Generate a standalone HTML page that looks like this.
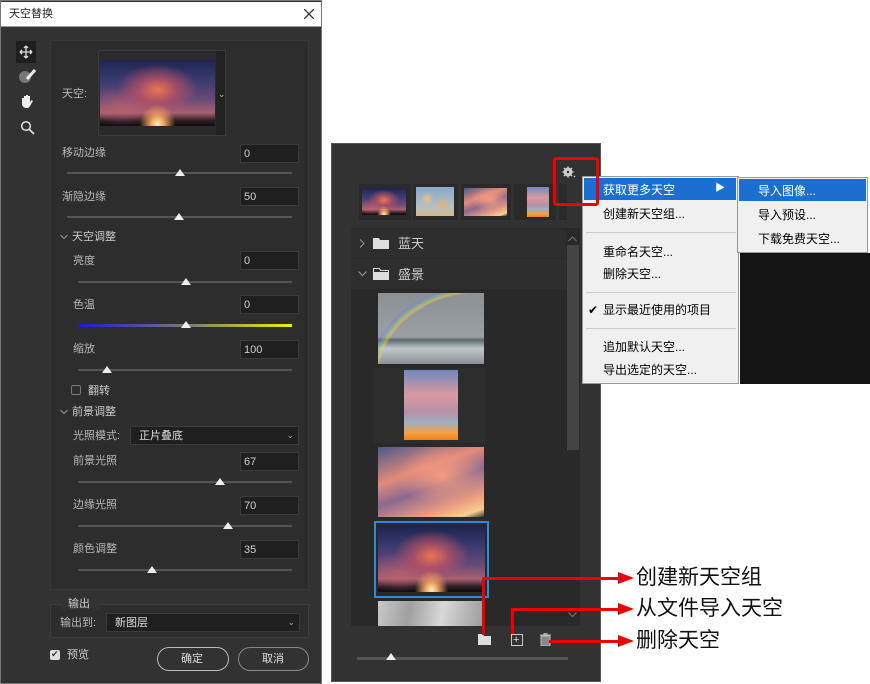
<!DOCTYPE html>
<html><head><meta charset="utf-8">
<style>
*{margin:0;padding:0;box-sizing:border-box}
body{width:870px;height:684px;background:#fff;position:relative;overflow:hidden;font-family:"Liberation Sans","Noto Sans CJK SC",sans-serif;font-size:11px;color:#b8b8b8}
.a{position:absolute}
.t{position:absolute;white-space:nowrap;line-height:12px}
.inp{position:absolute;background:#1f1f1f;border:1px solid #3a3a3a;height:19px;color:#d0d0d0;padding:3px 0 0 3px;font-size:11px;line-height:12px}
.trk{position:absolute;height:2px;background:#555}
.th{position:absolute;width:0;height:0;border-left:5px solid transparent;border-right:5px solid transparent;border-bottom:7px solid #eee}
.sun{background:radial-gradient(ellipse at 50% 97%,#fff0c0 0,#f0a060 8%,transparent 22%),radial-gradient(ellipse at 50% 45%,rgba(240,120,80,.95) 0,rgba(190,80,100,.7) 25%,transparent 50%),radial-gradient(ellipse at 20% 70%,rgba(200,100,110,.6) 0,transparent 30%),linear-gradient(#1e2450,#3a3a70 30%,#6a4a78 60%,#a86070 80%,#2a1c24 92%,#100c12)}
.pink{background:radial-gradient(ellipse at 60% 40%,#f59a80 0,transparent 50%),linear-gradient(160deg,#4a5a8a,#e38a7a 35%,#8a6a90 55%,#f0a080 80%,#f5d090 92%,#403030)}
.vert{background:linear-gradient(#6f88c0,#d99aa0 35%,#b890a8 60%,#9cb0c0 75%,#f5a040 90%,#f08020)}
.cloud{background:radial-gradient(circle at 30% 40%,#f0c080 0,transparent 20%),radial-gradient(circle at 70% 60%,#e8b070 0,transparent 20%),linear-gradient(#8aa8c8,#b8c0c0 70%,#d8b888)}
.menu .t{color:#000;font-size:12px}
.sep{position:absolute;height:1px;background:#c8c8c8}
.ann{position:absolute;font-size:21px;color:#111;white-space:nowrap;line-height:22px}
.rl{position:absolute;background:#e00}
.arr{position:absolute;width:0;height:0;border-top:6px solid transparent;border-bottom:6px solid transparent;border-left:16px solid #e00}
</style></head><body>

<div class="a" style="left:0;top:0;width:322px;height:684px;background:#323232;border:1px solid #777"></div>
<div class="a" style="left:1px;top:2px;width:320px;height:25px;background:#fff;border-bottom:1px solid #999"></div>
<div class="t" style="left:9px;top:8px;color:#222;font-size:11px">天空替换</div>
<svg class="a" style="left:304px;top:9px" width="10" height="10"><path d="M0 0L10 10M10 0L0 10" stroke="#333" stroke-width="1.3"/></svg>

<div class="a" style="left:16px;top:41px;width:20px;height:22px;background:#1e1e1e"></div>
<svg class="a" style="left:19px;top:45px" width="14" height="14" viewBox="0 0 14 14"><path d="M7 1v12M1 7h12M7 1l-2 2M7 1l2 2M7 13l-2-2M7 13l2-2M1 7l2-2M1 7l2 2M13 7l-2-2M13 7l-2 2" stroke="#ddd" stroke-width="1.3" fill="none"/></svg>
<svg class="a" style="left:18px;top:68px" width="20" height="16" viewBox="0 0 20 16"><circle cx="7" cy="9" r="6" fill="#777"/><path d="M17 2L9 11" stroke="#eee" stroke-width="3"/></svg>
<svg class="a" style="left:19px;top:93px" width="16" height="16" viewBox="0 0 16 16"><path d="M3 9V5h2v3V3h2v5V2h2v6V3h2v6l1.5-2 1.5 1-3 5c-1 2-2 2-4 2H7c-2 0-4-2-4-4z" fill="#eee"/></svg>
<svg class="a" style="left:20px;top:120px" width="15" height="15" viewBox="0 0 15 15"><circle cx="6" cy="6" r="4.3" stroke="#ddd" stroke-width="1.5" fill="none"/><path d="M9 9l5 5" stroke="#ddd" stroke-width="1.8"/></svg>

<div class="a" style="left:50px;top:40px;width:259px;height:550px;background:#2d2d2d;border:1px solid #383838"></div>
<div class="a" style="left:98px;top:50px;width:128px;height:86px;background:#2a2a2a;border:1px solid #3a3a3a"></div>
<div class="a sun" style="left:100px;top:60px;width:115px;height:66px"></div>
<div class="a" style="left:216px;top:51px;width:9px;height:84px;background:#222"></div>
<div class="t" style="left:218px;top:88px;font-size:9px">⌄</div>
<div class="t" style="left:62px;top:88px">天空:</div>

<div class="t" style="left:62px;top:147px">移动边缘</div>
<div class="inp" style="left:240px;top:144px;width:59px">0</div>
<div class="trk" style="left:67px;top:172px;width:225px"></div><div class="th" style="left:175px;top:169px"></div>

<div class="t" style="left:62px;top:191px">渐隐边缘</div>
<div class="inp" style="left:240px;top:187px;width:59px">50</div>
<div class="trk" style="left:67px;top:216px;width:225px"></div><div class="th" style="left:174px;top:213px"></div>

<svg class="a" style="left:60px;top:234px" width="8" height="6"><path d="M0.5 1l3.5 3.5 3.5-3.5" stroke="#999" fill="none"/></svg>
<div class="t" style="left:72px;top:231px;color:#ccc">天空调整</div>

<div class="t" style="left:73px;top:255px">亮度</div>
<div class="inp" style="left:240px;top:251px;width:59px">0</div>
<div class="trk" style="left:78px;top:281px;width:214px"></div><div class="th" style="left:181px;top:278px"></div>

<div class="t" style="left:73px;top:299px">色温</div>
<div class="inp" style="left:240px;top:295px;width:59px">0</div>
<div class="a" style="left:78px;top:324px;width:214px;height:3px;background:linear-gradient(90deg,#1a1ad8,#777 50%,#f0f000)"></div><div class="th" style="left:181px;top:321px"></div>

<div class="t" style="left:73px;top:343px">缩放</div>
<div class="inp" style="left:240px;top:340px;width:59px">100</div>
<div class="trk" style="left:78px;top:369px;width:214px"></div><div class="th" style="left:102px;top:366px"></div>

<div class="a" style="left:71px;top:385px;width:10px;height:10px;border:1px solid #777;border-radius:2px"></div>
<div class="t" style="left:88px;top:385px;color:#ccc">翻转</div>

<svg class="a" style="left:60px;top:409px" width="8" height="6"><path d="M0.5 1l3.5 3.5 3.5-3.5" stroke="#999" fill="none"/></svg>
<div class="t" style="left:72px;top:406px;color:#ccc">前景调整</div>
<div class="t" style="left:73px;top:430px">光照模式:</div>
<div class="inp" style="left:130px;top:426px;width:169px;padding-left:8px;color:#ddd">正片叠底<span style="position:absolute;right:4px;top:2px;font-size:9px;color:#aaa">⌄</span></div>

<div class="t" style="left:73px;top:455px">前景光照</div>
<div class="inp" style="left:240px;top:452px;width:59px">67</div>
<div class="trk" style="left:78px;top:481px;width:214px"></div><div class="th" style="left:215px;top:478px"></div>

<div class="t" style="left:73px;top:499px">边缘光照</div>
<div class="inp" style="left:240px;top:496px;width:59px">70</div>
<div class="trk" style="left:78px;top:525px;width:214px"></div><div class="th" style="left:223px;top:522px"></div>

<div class="t" style="left:73px;top:543px">颜色调整</div>
<div class="inp" style="left:240px;top:540px;width:59px">35</div>
<div class="trk" style="left:78px;top:569px;width:214px"></div><div class="th" style="left:147px;top:566px"></div>

<div class="a" style="left:50px;top:604px;width:259px;height:34px;border:1px solid #3c3c3c;background:#2d2d2d"></div>
<div class="a" style="left:62px;top:598px;width:38px;height:12px;background:#323232"></div>
<div class="t" style="left:68px;top:598px;color:#ccc">输出</div>
<div class="t" style="left:60px;top:617px">输出到:</div>
<div class="inp" style="left:106px;top:613px;width:194px;padding-left:8px;color:#ddd">新图层<span style="position:absolute;right:4px;top:2px;font-size:9px;color:#aaa">⌄</span></div>

<div class="a" style="left:50px;top:650px;width:10px;height:10px;background:#ddd;border-radius:2px"></div>
<div class="t" style="left:51px;top:648px;color:#333;font-size:9px">✔</div>
<div class="t" style="left:67px;top:649px;color:#ccc">预览</div>
<div class="a" style="left:157px;top:647px;width:72px;height:24px;border:1px solid #bbb;border-radius:12px"></div>
<div class="t" style="left:181px;top:653px;color:#ddd">确定</div>
<div class="a" style="left:238px;top:647px;width:71px;height:24px;border:1px solid #888;border-radius:12px"></div>
<div class="t" style="left:262px;top:653px;color:#ddd">取消</div>

<div class="a" style="left:331px;top:143px;width:270px;height:539px;background:#323232;border:1px solid #555"></div>
<svg class="a" style="left:562px;top:166px" width="14" height="12" viewBox="0 0 14 12"><circle cx="6" cy="6" r="3" fill="none" stroke="#ccc" stroke-width="3"/><path d="M6 0.5v11M0.5 6h11M2 2l8 8M10 2l-8 8" stroke="#ccc" stroke-width="1.5"/><circle cx="6" cy="6" r="1.2" fill="#323232"/><circle cx="12.5" cy="10.5" r="0.8" fill="#ccc"/></svg>
<div class="a" style="left:359px;top:184px;width:52px;height:36px;background:#2a2a2a"></div>
<div class="a sun" style="left:362px;top:188px;width:44px;height:27px"></div>
<div class="a" style="left:413px;top:184px;width:45px;height:36px;background:#2a2a2a"></div>
<div class="a cloud" style="left:416px;top:187px;width:38px;height:29px"></div>
<div class="a" style="left:461px;top:184px;width:50px;height:36px;background:#2a2a2a"></div>
<div class="a pink" style="left:464px;top:188px;width:43px;height:28px"></div>
<div class="a" style="left:514px;top:184px;width:42px;height:36px;background:#2a2a2a"></div>
<div class="a vert" style="left:527px;top:187px;width:22px;height:30px"></div>
<div class="a" style="left:559px;top:184px;width:8px;height:36px;background:#2a2a2a"></div>

<div class="a" style="left:351px;top:228px;width:229px;height:398px;background:#292929"></div>
<div class="a" style="left:351px;top:230px;width:215px;height:28px;background:#2e2e2e"></div>
<div class="a" style="left:351px;top:259px;width:215px;height:30px;background:#2e2e2e"></div>
<svg class="a" style="left:359px;top:239px" width="6" height="9"><path d="M1 0.5l4 4-4 4" stroke="#999" fill="none"/></svg>
<svg class="a" style="left:373px;top:237px" width="16" height="12"><path d="M0 1h6l1 2h9v9H0z" fill="#ddd"/></svg>
<div class="t" style="left:398px;top:237px;font-size:13px;color:#ccc;line-height:14px">蓝天</div>
<svg class="a" style="left:358px;top:271px" width="9" height="6"><path d="M0.5 0.5l4 4 4-4" stroke="#999" fill="none"/></svg>
<svg class="a" style="left:373px;top:268px" width="16" height="12"><path d="M0.5 0.5h6l1 2h8v9h-15z" fill="none" stroke="#ddd"/><path d="M0 4h16v8H0z" fill="#ddd"/></svg>
<div class="t" style="left:398px;top:268px;font-size:13px;color:#ccc;line-height:14px">盛景</div>
<div class="a" style="left:567px;top:245px;width:12px;height:205px;background:#444"></div>
<svg class="a" style="left:568px;top:236px" width="9" height="6"><path d="M0.5 5l4-4 4 4" stroke="#777" fill="none"/></svg>
<svg class="a" style="left:568px;top:612px" width="9" height="6"><path d="M0.5 0.5l4 4 4-4" stroke="#777" fill="none"/></svg>

<div class="a" style="left:378px;top:293px;width:106px;height:71px;background:radial-gradient(ellipse at 95% 120%,transparent 70%,rgba(255,200,80,.5) 72%,rgba(120,200,120,.5) 74%,rgba(120,120,255,.4) 76%,transparent 78%),linear-gradient(#8a9094,#9aa0a4 62%,#5a6a6a 66%,#c0c8cc 78%,#8a9096)"></div>
<div class="a" style="left:374px;top:368px;width:112px;height:75px;background:#2d2d2d"></div>
<div class="a vert" style="left:404px;top:370px;width:54px;height:70px"></div>
<div class="a pink" style="left:378px;top:447px;width:106px;height:70px"></div>
<div class="a" style="left:374px;top:521px;width:115px;height:77px;border:2px solid #2c8ae0"></div>
<div class="a sun" style="left:378px;top:526px;width:107px;height:66px"></div>
<div class="a" style="left:378px;top:601px;width:106px;height:25px;background:linear-gradient(100deg,#c8c8c8,#a0a0a0 30%,#d8d8d8 60%,#9a9a9a)"></div>

<svg class="a" style="left:478px;top:634px" width="13" height="11"><path d="M0 0h5l1 2h7v9H0z" fill="#ddd"/></svg>
<div class="a" style="left:511px;top:634px;width:12px;height:12px;border:1px solid #ccc"></div>
<div class="t" style="left:513px;top:634px;color:#ddd;font-size:11px">+</div>
<svg class="a" style="left:540px;top:633px" width="11" height="13"><path d="M0 2h11M4 2V0h3v2M1 3h9v10H1z" fill="#888" stroke="#bbb"/></svg>
<div class="trk" style="left:357px;top:657px;width:211px;background:#555;height:3px"></div><div class="th" style="left:386px;top:653px"></div>

<div class="a" style="left:582px;top:176px;width:157px;height:208px;background:#f0f0f0;border:1px solid #999"></div>
<div class="a" style="left:584px;top:178px;width:152px;height:22px;background:#1a6fd0"></div>
<div class="menu">
<div class="t" style="left:603px;top:184px;color:#fff">获取更多天空</div>
<div class="t" style="left:715px;top:183px;color:#fff;font-size:10px">▶</div>
<div class="t" style="left:603px;top:208px">创建新天空组...</div>
<div class="sep" style="left:586px;top:232px;width:150px"></div>
<div class="t" style="left:603px;top:246px">重命名天空...</div>
<div class="t" style="left:603px;top:268px">删除天空...</div>
<div class="sep" style="left:586px;top:292px;width:150px"></div>
<div class="t" style="left:588px;top:304px">✔</div>
<div class="t" style="left:603px;top:304px">显示最近使用的项目</div>
<div class="sep" style="left:586px;top:328px;width:150px"></div>
<div class="t" style="left:603px;top:341px">追加默认天空...</div>
<div class="t" style="left:603px;top:364px">导出选定的天空...</div>
</div>
<div class="a" style="left:740px;top:253px;width:130px;height:131px;background:#141414"></div>
<div class="a" style="left:737px;top:177px;width:131px;height:76px;background:#f0f0f0;border:1px solid #999"></div>
<div class="a" style="left:739px;top:179px;width:127px;height:22px;background:#1a6fd0"></div>
<div class="menu">
<div class="t" style="left:758px;top:185px;color:#fff">导入图像...</div>
<div class="t" style="left:758px;top:209px">导入预设...</div>
<div class="t" style="left:758px;top:233px">下载免费天空...</div>
</div>

<div class="a" style="left:553px;top:157px;width:46px;height:49px;border:3px solid #e00;border-radius:3px"></div>

<div class="rl" style="left:482px;top:577px;width:3px;height:58px"></div>
<div class="rl" style="left:482px;top:577px;width:138px;height:3px"></div>
<div class="arr" style="left:618px;top:572px"></div>
<div class="ann" style="left:636px;top:567px">创建新天空组</div>
<div class="rl" style="left:511px;top:608px;width:3px;height:26px"></div>
<div class="rl" style="left:511px;top:608px;width:109px;height:3px"></div>
<div class="arr" style="left:618px;top:603px"></div>
<div class="ann" style="left:636px;top:598px">从文件导入天空</div>
<div class="rl" style="left:549px;top:640px;width:71px;height:3px"></div>
<div class="arr" style="left:618px;top:635px"></div>
<div class="ann" style="left:636px;top:630px">删除天空</div>
</body></html>
